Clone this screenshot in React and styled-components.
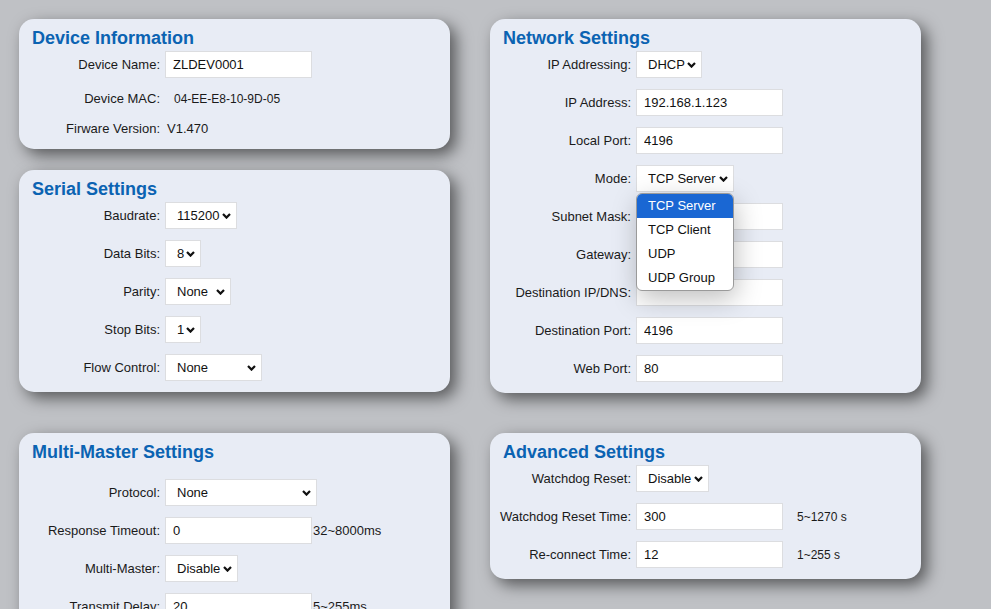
import React from "react"
import styled, { createGlobalStyle } from "styled-components"

const GlobalStyle = createGlobalStyle`
  html {
    overflow: hidden;
    background: #bfc1c5;
  }
  body {
    margin: 0;
    background: #bfc1c5;
    font-family: "Liberation Sans", Arial, sans-serif;
    color: #1a1a1a;
  }
`

const Page = styled.div`
  display: grid;
  grid-template-columns: 431px 431px;
  column-gap: 40px;
  row-gap: 40px;
  align-items: start;
  padding: 19px;
`

const Column = styled.div`
  display: flex;
  flex-direction: column;
  gap: 21px;
`

const Card = styled.section`
  background: #e8ecf5;
  border-radius: 15px;
  box-shadow: 6px 6px 16px rgba(0, 0, 0, 0.55);
  padding: 9px 12px 11px 9px;
`

const Title = styled.h2`
  margin: 0 0 ${(p) => (p.$spaced ? 16 : 2)}px 4px;
  font-size: 18px;
  line-height: 21px;
  font-weight: bold;
  color: #0b63b2;
`

const Form = styled.div`
  display: flex;
  flex-direction: column;
  gap: 11px;
`

const Row = styled.div`
  display: flex;
  align-items: center;
  min-height: ${(p) => (p.$text ? 19 : 27)}px;
`

const Label = styled.label`
  width: 132px;
  flex-shrink: 0;
  margin-right: 5px;
  text-align: right;
  font-size: 13px;
  white-space: nowrap;
`

const Value = styled.span`
  font-size: ${(p) => (p.$small ? 12 : 13)}px;
  margin-left: ${(p) => p.$indent}px;
`

const TextInput = styled.input`
  box-sizing: border-box;
  width: 147px;
  height: 27px;
  margin: 0;
  padding: 0 7px;
  border: 1px solid #dcdde0;
  background: #fff;
  font-family: inherit;
  font-size: 13px;
  color: #111;
  outline: none;
`

const Hint = styled.span`
  font-size: ${(p) => (p.$small ? 12 : 13)}px;
  margin-left: ${(p) => (p.$small ? 14 : 1)}px;
  white-space: nowrap;
`

const SelectWrap = styled.div`
  position: relative;
`

const SelectBox = styled.div`
  box-sizing: border-box;
  display: flex;
  align-items: center;
  justify-content: space-between;
  width: ${(p) => p.$width}px;
  height: 27px;
  padding: 0 5px 0 11px;
  border: 1px solid #dcdde0;
  background: #fff;
  font-size: 13px;
  color: #111;
  white-space: nowrap;
`

const Menu = styled.ul`
  position: absolute;
  top: calc(100% + 1px);
  left: 0;
  z-index: 5;
  box-sizing: border-box;
  width: 98px;
  margin: 0;
  padding: 0;
  list-style: none;
  background: #fff;
  border: 1px solid #9a9a9a;
  border-radius: 6px;
  overflow: hidden;
  box-shadow: 2px 8px 26px rgba(0, 0, 0, 0.25);
`

const MenuItem = styled.li`
  height: 24px;
  line-height: 24px;
  padding-left: 11px;
  font-size: 13px;
  color: ${(p) => (p.$active ? "#fff" : "#111")};
  background: ${(p) => (p.$active ? "#1a67d3" : "transparent")};
`

function Chevron() {
  return (
    <svg width="9" height="6" viewBox="0 0 9 6">
      <path d="M1 1 L4.5 4.6 L8 1" fill="none" stroke="#111" strokeWidth="2.2" />
    </svg>
  )
}

function Select({ value, width, options }) {
  return (
    <SelectWrap>
      <SelectBox $width={width}>
        <span>{value}</span>
        <Chevron />
      </SelectBox>
      {options && (
        <Menu>
          {options.map((o) => (
            <MenuItem key={o} $active={o === value}>
              {o}
            </MenuItem>
          ))}
        </Menu>
      )}
    </SelectWrap>
  )
}

function Field({ label, children, text }) {
  return (
    <Row $text={text}>
      <Label>{label}</Label>
      {children}
    </Row>
  )
}

export default function App() {
  return (
    <>
      <GlobalStyle />
      <Page>
        <Column>
          <Card>
            <Title>Device Information</Title>
            <Form>
              <Field label="Device Name:">
                <TextInput defaultValue="ZLDEV0001" />
              </Field>
              <Field label="Device MAC:" text>
                <Value $small $indent={9}>04-EE-E8-10-9D-05</Value>
              </Field>
              <Field label="Firware Version:" text>
                <Value $indent={2}>V1.470</Value>
              </Field>
            </Form>
          </Card>
          <Card>
            <Title>Serial Settings</Title>
            <Form>
              <Field label="Baudrate:">
                <Select value="115200" width={72} />
              </Field>
              <Field label="Data Bits:">
                <Select value="8" width={36} />
              </Field>
              <Field label="Parity:">
                <Select value="None" width={66} />
              </Field>
              <Field label="Stop Bits:">
                <Select value="1" width={36} />
              </Field>
              <Field label="Flow Control:">
                <Select value="None" width={97} />
              </Field>
            </Form>
          </Card>
        </Column>

        <Card>
          <Title>Network Settings</Title>
          <Form>
            <Field label="IP Addressing:">
              <Select value="DHCP" width={66} />
            </Field>
            <Field label="IP Address:">
              <TextInput defaultValue="192.168.1.123" />
            </Field>
            <Field label="Local Port:">
              <TextInput defaultValue="4196" />
            </Field>
            <Field label="Mode:">
              <Select
                value="TCP Server"
                width={98}
                options={["TCP Server", "TCP Client", "UDP", "UDP Group"]}
              />
            </Field>
            <Field label="Subnet Mask:">
              <TextInput defaultValue="" />
            </Field>
            <Field label="Gateway:">
              <TextInput defaultValue="" />
            </Field>
            <Field label="Destination IP/DNS:">
              <TextInput defaultValue="" />
            </Field>
            <Field label="Destination Port:">
              <TextInput defaultValue="4196" />
            </Field>
            <Field label="Web Port:">
              <TextInput defaultValue="80" />
            </Field>
          </Form>
        </Card>

        <Card>
          <Title $spaced>Multi-Master Settings</Title>
          <Form>
            <Field label="Protocol:">
              <Select value="None" width={152} />
            </Field>
            <Field label="Response Timeout:">
              <TextInput defaultValue="0" />
              <Hint>32~8000ms</Hint>
            </Field>
            <Field label="Multi-Master:">
              <Select value="Disable" width={73} />
            </Field>
            <Field label="Transmit Delay:">
              <TextInput defaultValue="20" />
              <Hint>5~255ms</Hint>
            </Field>
          </Form>
        </Card>

        <Card>
          <Title>Advanced Settings</Title>
          <Form>
            <Field label="Watchdog Reset:">
              <Select value="Disable" width={73} />
            </Field>
            <Field label="Watchdog Reset Time:">
              <TextInput defaultValue="300" />
              <Hint $small>5~1270 s</Hint>
            </Field>
            <Field label="Re-connect Time:">
              <TextInput defaultValue="12" />
              <Hint $small>1~255 s</Hint>
            </Field>
          </Form>
        </Card>
      </Page>
    </>
  )
}
